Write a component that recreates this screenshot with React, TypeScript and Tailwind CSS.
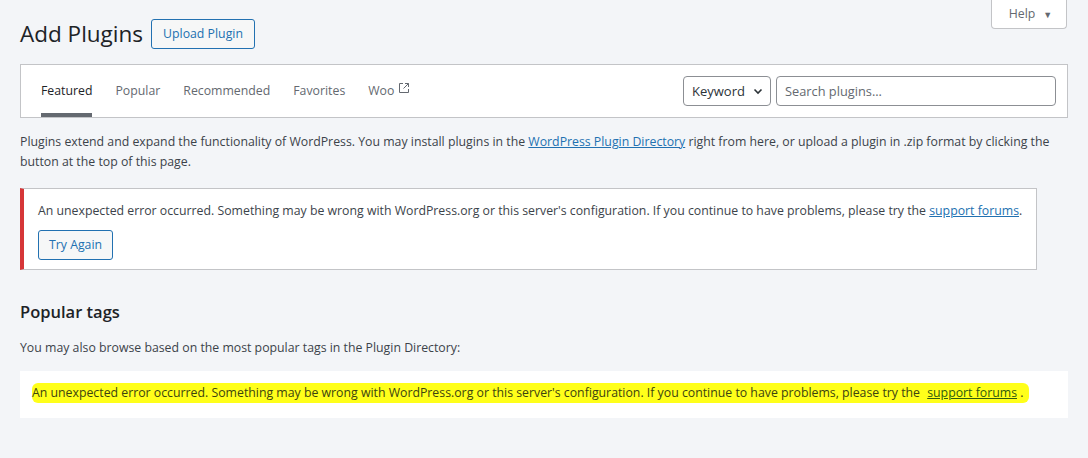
import React from "react";

const tabs = ["Featured", "Popular", "Recommended", "Favorites"];

const errorText =
  "An unexpected error occurred. Something may be wrong with WordPress.org or this server's configuration. If you continue to have problems, please try the";

export default function App() {
  return (
    <div className="relative min-h-[458px] bg-[#f3f5f8] text-[#3c434a] text-[12.3px] leading-[20px] font-['Open_Sans',sans-serif]">
      <button className="absolute top-0 right-[21px] flex h-[29px] w-[76px] items-center justify-center gap-[8px] rounded-b-[4px] border border-t-0 border-[#c3c4c7] bg-white pl-[3px] text-[12.3px] text-[#646970]">
        <span>Help</span>
        <span className="text-[9px] leading-none">▼</span>
      </button>

      <div className="px-5 pt-[19px]">
        <div className="flex items-center gap-[8px]">
          <h1 className="text-[22.5px] leading-[30px] font-normal text-[#1d2327]">Add Plugins</h1>
          <button className="h-[30px] rounded-[3px] border border-[#2271b1] bg-[#f6f7f7] px-[11px] text-[12.3px] text-[#2271b1]">
            Upload Plugin
          </button>
        </div>

        <div className="mt-[15px] flex h-[54px] items-stretch justify-between border border-[#c3c4c7] bg-white pl-[20px] pr-[11px]">
          <nav className="flex items-stretch gap-[23px]">
            {tabs.map((t, i) => (
              <a
                key={t}
                className={
                  i === 0
                    ? "flex items-center border-b-4 border-[#646970] pt-[4px] text-[#1d2327]"
                    : "flex items-center border-b-4 border-transparent pt-[4px] text-[#646970]"
                }
              >
                {t}
              </a>
            ))}
            <a className="flex items-center gap-[4px] border-b-4 border-transparent pt-[4px] text-[#646970]">
              Woo
              <svg width="12" height="12" viewBox="0 0 12 12" fill="none" stroke="#646970" strokeWidth="1" className="mb-[6px]">
                <path d="M5 1.5H1.5V10.5H10.5V7" />
                <path d="M7 1.5H10.5V5" />
                <path d="M10.5 1.5L5.5 6.5" />
              </svg>
            </a>
          </nav>
          <div className="flex items-center gap-[5px]">
            <div className="flex h-[30px] w-[88px] items-center justify-between rounded-[4px] border border-[#8c8f94] bg-white pl-[8px] pr-[6px] text-[13px] text-[#2c3338]">
              <span>Keyword</span>
              <svg width="12" height="12" viewBox="0 0 12 12" fill="none" stroke="#2c3338" strokeWidth="1.6">
                <path d="M2.5 4.5L6 8L9.5 4.5" />
              </svg>
            </div>
            <div className="flex h-[30px] w-[280px] items-center rounded-[4px] border border-[#8c8f94] bg-white px-[8px] text-[12.8px] text-[#646970]">
              Search plugins...
            </div>
          </div>
        </div>

        <p className="mt-[14px]">
          Plugins extend and expand the functionality of WordPress. You may install plugins in the{" "}
          <a className="text-[#2271b1] underline">WordPress Plugin Directory</a> right from here, or upload a plugin in
          .zip format by clicking the button at the top of this page.
        </p>

        <div className="mt-[16px] mr-[31px] border border-l-4 border-[#c3c4c7] border-l-[#d63638] bg-white pt-[12px] pb-[9px] pl-[14px]">
          <p>
            {errorText} <a className="text-[#2271b1] underline">support forums</a>.
          </p>
          <button className="mt-[9px] h-[30px] rounded-[3px] border border-[#2271b1] bg-[#f6f7f7] px-[10px] text-[12.3px] text-[#2271b1]">
            Try Again
          </button>
        </div>

        <h2 className="mt-[31px] text-[16.5px] leading-[22px] font-semibold text-[#1d2327]">Popular tags</h2>
        <p className="mt-[15px]">You may also browse based on the most popular tags in the Plugin Directory:</p>

        <div className="mt-[13px] flex h-[47px] items-center bg-white pb-[3px] pl-[12px]">
          <span className="rounded-[6px] bg-[#ffff1a] py-[0px] pr-[6px] text-[#3c4310]">
            {errorText}{"  "}
            <a className="pl-[4px] text-[#2f5a10] underline">support forums</a> .
          </span>
        </div>
      </div>
    </div>
  );
}
